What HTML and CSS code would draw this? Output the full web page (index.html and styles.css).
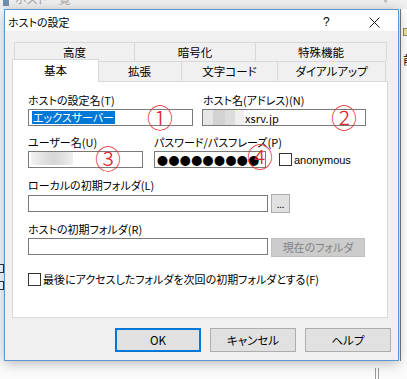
FILE: index.html
```html
<!DOCTYPE html>
<html lang="ja">
<head>
  <meta charset="UTF-8" />
  <title>ホストの設定</title>
  <link rel="stylesheet" href="styles.css">
</head>
<body>
  <div class="bgwin">
    <div class="bgwin-title"><span class="bgwin-icon"></span><span class="bgwin-text">ホスト一覧</span><span class="bgwin-chev">∨</span></div>
    <div class="bgwin-side"><span class="side-icon"></span><span class="side-text">前</span></div>
    <div class="bgwin-left"><span class="folder"></span><span class="folder"></span></div>
    <div class="bgwin-bottom"></div>
  </div>

  <div class="dialog">
    <div class="titlebar">
      <span class="title">ホストの設定</span>
      <span class="help">?</span>
      <span class="close">
        <svg width="11" height="11" viewBox="0 0 11 11"><path d="M0.5 0.5 L10.5 10.5 M10.5 0.5 L0.5 10.5" stroke="#1a1a1a" stroke-width="1" fill="none"/></svg>
      </span>
    </div>

    <div class="dialog-body">
      <div class="tabs">
        <div class="tab-row back">
          <div class="tab t-adv">高度</div>
          <div class="tab t-enc">暗号化</div>
          <div class="tab t-spc">特殊機能</div>
        </div>
        <div class="tab-row front">
          <div class="tab t-basic active">基本</div>
          <div class="tab t-ext">拡張</div>
          <div class="tab t-code">文字コード</div>
          <div class="tab t-dial">ダイアルアップ</div>
        </div>
      </div>

      <div class="panel">
        <div class="row row-1">
          <div class="field f-name">
            <div class="label">ホストの設定名(T)</div>
            <div class="edit"><span class="sel">エックスサーバー</span></div>
          </div>
          <div class="field f-addr">
            <div class="label">ホスト名(アドレス)(N)</div>
            <div class="edit"><span class="blur blur-addr"></span><span class="val">xsrv.jp</span></div>
          </div>
        </div>

        <div class="row row-2">
          <div class="field f-user">
            <div class="label">ユーザー名(U)</div>
            <div class="edit"><span class="blur blur-user"></span></div>
          </div>
          <div class="field f-pass">
            <div class="label">パスワード/パスフレーズ(P)</div>
            <div class="line">
              <div class="edit e-pass"><span class="dots">●●●●●●●●●</span></div>
              <span class="check"></span>
              <span class="check-text anon">anonymous</span>
            </div>
          </div>
        </div>

        <div class="row row-3">
          <div class="field">
            <div class="label">ローカルの初期フォルダ(L)</div>
            <div class="line">
              <div class="edit e-wide"></div>
              <div class="btn btn-browse">...</div>
            </div>
          </div>
        </div>

        <div class="row row-4">
          <div class="field">
            <div class="label">ホストの初期フォルダ(R)</div>
            <div class="line line-top">
              <div class="edit e-wide"></div>
              <div class="btn btn-current">現在のフォルダ</div>
            </div>
          </div>
        </div>

        <div class="row row-5">
          <span class="check"></span>
          <span class="check-text">最後にアクセスしたフォルダを次回の初期フォルダとする(F)</span>
        </div>
      </div>

      <div class="buttons">
        <div class="btn btn-main default">OK</div>
        <div class="btn btn-main">キャンセル</div>
        <div class="btn btn-main">ヘルプ</div>
      </div>
    </div>

    <span class="mark m1">①</span>
    <span class="mark m2">②</span>
    <span class="mark m3">③</span>
    <span class="mark m4">④</span>
  </div>
</body>
</html>
```

FILE: styles.css
```css
* {
  box-sizing: border-box;
}
body {
  margin: 0;
  width: 407px;
  height: 379px;
  overflow: hidden;
  position: relative;
  background: #fbfbfb;
  font-family: "Noto Sans CJK JP", "Liberation Sans", sans-serif;
  font-size: 11px;
  line-height: 16px;
  color: #000;
  font-feature-settings: "palt";
}

/* window behind the dialog */
.bgwin-title {
  height: 9px;
  background: #f0f0f0;
  position: relative;
  overflow: hidden;
}
.bgwin-icon {
  position: absolute;
  left: 3px;
  top: -4px;
  width: 6px;
  height: 10px;
  background: #6f8fb4;
}
.bgwin-text {
  position: absolute;
  left: 15px;
  top: -9px;
  color: #a8a8a8;
  font-size: 12px;
}
.bgwin-chev {
  position: absolute;
  left: 380px;
  top: -10px;
  color: #9a9a9a;
  font-size: 11px;
}
.bgwin-side {
  position: absolute;
  left: 400px;
  top: 9px;
  width: 7px;
  height: 352px;
  border-left: 1px solid #7a7a7a;
  background: #fff;
}
.side-icon {
  position: absolute;
  left: 2px;
  top: 19px;
  width: 6px;
  height: 8px;
  background: #e8e29a;
  border: 1px solid #8a8a5a;
}
.side-text {
  position: absolute;
  left: 2px;
  top: 43px;
  font-size: 12px;
}
.bgwin-left {
  position: absolute;
  left: 0;
  top: 264px;
  width: 4px;
  display: flex;
  flex-direction: column;
  gap: 8px;
}
.folder {
  display: block;
  width: 8px;
  height: 9px;
  margin-left: -4px;
  border: 1px solid #333;
  background: #fff;
}
.bgwin-bottom {
  position: absolute;
  left: 375px;
  top: 368px;
  width: 4px;
  height: 11px;
  border-left: 1px solid #999;
  border-right: 1px solid #999;
}

/* dialog */
.dialog {
  position: absolute;
  left: 4px;
  top: 9px;
  width: 395px;
  height: 352px;
  border: 1px solid #5b97d3;
  background: #f0f0f0;
  box-shadow: 0 2px 12px rgba(0, 0, 0, 0.28);
}
.titlebar {
  height: 21px;
  background: #fff;
  display: flex;
  align-items: center;
  padding-left: 3px;
}
.title {
  flex: 1;
  font-size: 11px;
  padding-top: 2px;
}
.help {
  font-size: 12px;
  width: 12px;
  margin-right: 34px;
  padding-top: 2px;
  font-family: "Liberation Sans", sans-serif;
}
.close {
  width: 11px;
  height: 11px;
  margin-right: 18px;
  margin-top: 3px;
  display: flex;
}
.dialog-body {
  padding: 11px 7px 0 7px;
}

/* tabs */
.tabs {
  width: 376px;
}
.tab-row {
  display: flex;
}
.tab-row.back {
  height: 19px;
  margin-left: 2px;
}
.tab-row.front {
  height: 20px;
}
.tab {
  border-top: 1px solid #d9d9d9;
  border-left: 1px solid #d9d9d9;
  background: #f0f0f0;
  text-align: center;
  line-height: 18px;
  font-size: 11.5px;
}
.tab:last-child {
  border-right: 1px solid #d9d9d9;
}
.t-adv { width: 120px; }
.t-enc { width: 121px; }
.t-spc { width: 132px; }
.t-basic { width: 87px; }
.t-ext { width: 83px; }
.t-code { width: 96px; }
.t-dial { width: 109px; }
.tab.active {
  position: relative;
  z-index: 1;
  background: #fff;
  height: 23px;
  margin-top: -2px;
  border-right: 1px solid #d9d9d9;
  margin-right: -1px;
  line-height: 20px;
}
.tab.active + .tab {
  border-left: none;
}

.panel {
  width: 376px;
  height: 237px;
  border: 1px solid #d9d9d9;
  background: #fff;
  padding: 10px 0 0 15px;
}
.row {
  display: flex;
}
.field {
  display: flex;
  flex-direction: column;
}
.label {
  height: 16px;
  margin-bottom: 1px;
  white-space: nowrap;
}
.line {
  display: flex;
  align-items: center;
}
.line-top {
  align-items: flex-start;
}
.edit {
  height: 17px;
  border: 1px solid #7a7a7a;
  background: #fff;
  display: flex;
  align-items: center;
  padding-left: 2px;
  overflow: hidden;
}
.f-name .edit { width: 165px; }
.f-addr { margin-left: 9px; }
.f-addr .label { padding-left: 1px; }
.f-addr .edit { width: 164px; padding-left: 0; }
.row-2 { margin-top: 8px; }
.f-user .edit { width: 115px; }
.f-pass { margin-left: 11px; }
.e-pass { width: 112px; }
.row-3 { margin-top: 9px; }
.row-4 { margin-top: 8px; }
.e-wide { width: 240px; }
.row-5 {
  margin-top: 14px;
  align-items: center;
}

.sel {
  background: #0078d7;
  color: #fff;
  line-height: 13px;
  padding: 0 1px;
  margin-left: 1px;
}
.blur {
  display: block;
  height: 15px;
}
.blur-addr {
  width: 41px;
  background: linear-gradient(90deg, #e6e6e6 0, #e6e6e6 10px, #d2d2d2 10px, #d2d2d2 22px, #dcdcdc 22px, #dcdcdc 32px, #eeeeee 32px);
}
.blur-user {
  width: 42px;
  background: linear-gradient(90deg, #f2f2f2 0, #e2e2e2 12px, #d6d6d6 22px, #e0e0e0 32px, #efefef 42px);
  border-bottom: 2px solid #fff;
  position: relative;
}
.val {
  padding-left: 1px;
}
.dots {
  font-size: 11px;
  letter-spacing: 0.4px;
  line-height: 14px;
}
.check {
  display: inline-block;
  width: 13px;
  height: 13px;
  border: 1px solid #333;
  background: #fff;
  flex-shrink: 0;
}
.e-pass + .check {
  margin-left: 13px;
}
.check-text {
  margin-left: 2px;
}
.anon {
  font-family: "Liberation Sans", sans-serif;
  font-size: 11px;
}

/* buttons */
.btn {
  border: 1px solid #adadad;
  background: #e1e1e1;
  text-align: center;
}
.btn-browse {
  width: 19px;
  height: 19px;
  margin-left: 3px;
  font-size: 9px;
  line-height: 20px;
}
.btn-current {
  width: 94px;
  height: 19px;
  margin-left: 3px;
  background: #cccccc;
  border-color: #bfbfbf;
  color: #838383;
  line-height: 17px;
}
.buttons {
  display: flex;
  justify-content: flex-end;
  gap: 9px;
  margin-top: 10px;
}
.btn-main {
  width: 86px;
  height: 24px;
  line-height: 22px;
  font-size: 11.5px;
}
.btn-main.default {
  border: 2px solid #0078d7;
  line-height: 20px;
}

/* red annotation numbers */
.mark {
  position: absolute;
  width: 26px;
  text-align: center;
  font-size: 26px;
  line-height: 26px;
  color: #e3262a;
  font-weight: 300;
}
.m1 { left: 142px; top: 94px; }
.m2 { left: 326px; top: 94px; }
.m3 { left: 90px; top: 135px; }
.m4 { left: 242px; top: 133px; }
```
